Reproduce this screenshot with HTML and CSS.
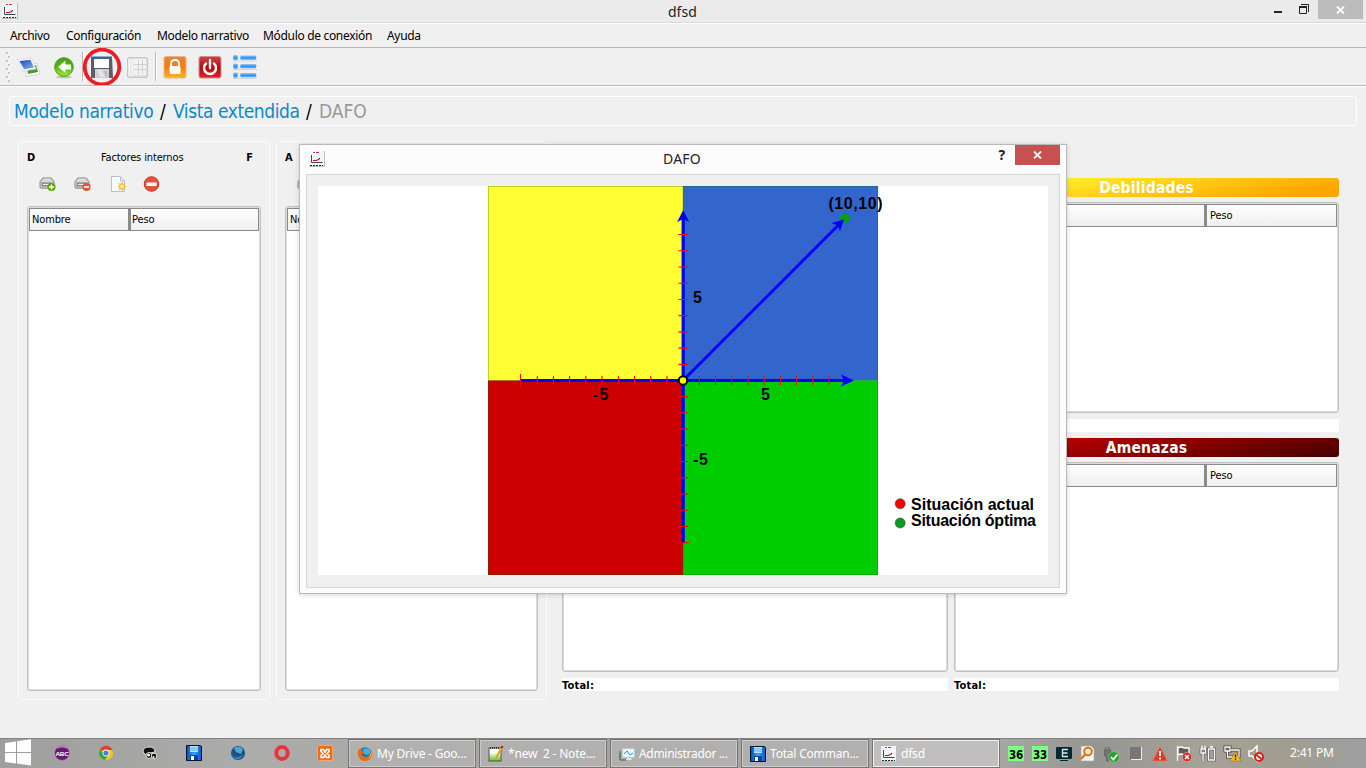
FILE: index.html
```html
<!DOCTYPE html>
<html lang="es">
<head>
<meta charset="utf-8">
<title>dfsd</title>
<link rel="stylesheet" href="styles.css">
</head>
<body>
<svg class="defs" width="0" height="0" aria-hidden="true">
  <defs>
    <linearGradient id="gBlue" x1="0" y1="0" x2="1" y2="1"><stop offset="0" stop-color="#1745ad"/><stop offset="1" stop-color="#8fb4ee"/></linearGradient>
    <linearGradient id="gGreen" x1="0" y1="0" x2="0" y2="1"><stop offset="0" stop-color="#3fa10e"/><stop offset=".5" stop-color="#5bb512"/><stop offset="1" stop-color="#a4e83a"/></linearGradient>
    <linearGradient id="gOrange" x1="0" y1="0" x2="0" y2="1"><stop offset="0" stop-color="#e8843a"/><stop offset=".5" stop-color="#fb7b04"/><stop offset="1" stop-color="#ffb52c"/></linearGradient>
    <linearGradient id="gRed" x1="0" y1="0" x2="0" y2="1"><stop offset="0" stop-color="#c9474a"/><stop offset=".5" stop-color="#b80a10"/><stop offset="1" stop-color="#e0212a"/></linearGradient>
    <linearGradient id="gBar" x1="0" y1="0" x2="0" y2="1"><stop offset="0" stop-color="#8cc4ff"/><stop offset=".5" stop-color="#2b8cf8"/><stop offset="1" stop-color="#55b2ff"/></linearGradient>
    <linearGradient id="gDisk" x1="0" y1="0" x2="1" y2="0"><stop offset="0" stop-color="#0a49b8"/><stop offset=".5" stop-color="#35a5ff"/><stop offset="1" stop-color="#0b55c8"/></linearGradient>
    <linearGradient id="gNote" x1="0" y1="0" x2="0" y2="1"><stop offset="0" stop-color="#ffffff"/><stop offset=".4" stop-color="#f4fbe8"/><stop offset="1" stop-color="#56c41c"/></linearGradient>
    <symbol id="app" viewBox="0 0 16 16">
      <rect width="16" height="16" fill="#b7c0c9"/><rect width="15" height="15" fill="#f4f7fa"/>
      <path d="M4 1.500h2M7 1.500h3" stroke="#c33"/><path d="M2.500 4v7.500h11" fill="none" stroke="#445"/>
      <path d="M4 9.500h3l2-.7 1.500-1" fill="none" stroke="#b11" stroke-width="1.100"/><path d="M10 7.500h1" stroke="#222"/>
      <path d="M1 14.500h13" stroke="#222" stroke-width="1" stroke-dasharray="2 1"/>
    </symbol>
    <symbol id="drive" viewBox="0 0 18 16">
      <path d="M4 2h9l3 4v6q0 1-1 1H2q-1 0-1-1V6z" fill="#c4c4c4" stroke="#8b8b8b"/>
      <path d="M4.500 3.500h8M3 5.500h11" stroke="#eee"/><rect x="3.500" y="7.500" width="10" height="3" fill="#aaa" stroke="#777"/><path d="M4 9h8" stroke="#f6f6f6"/>
    </symbol>
    <symbol id="disk" viewBox="0 0 16 16">
      <path d="M.5.5h14l1 1v14H.5z" fill="url(#gDisk)" stroke="#07112b"/><rect x="4" y="1" width="8" height="6" fill="#b9e2ff"/><path d="M4 3h8M4 5h8" stroke="#58aef6"/><rect x="4" y="10" width="8" height="5" fill="#0a4694"/><rect x="5" y="11" width="3" height="4" fill="#fff"/>
    </symbol>
    <symbol id="firefox" viewBox="0 0 16 16">
      <circle cx="8" cy="7.800" r="6.500" fill="#1b70b8"/><path d="M6 3q4-2 7 1 1 3-2 5l-4-1z" fill="#38b6e6"/>
      <path d="M1.500 3Q.5 5 1 9q1 5.500 7 6 6 0 7.500-7 0-3-2-5 1 4-1 6-2 3-5 1.500Q5 10 4.500 8q2 0 3-2L5 5 4 2Q2.500 3 2.500 5z" fill="#ec6815"/><path d="M14 4q2 6-3 9 3-3 3-9z" fill="#ffd532"/>
    </symbol>
  </defs>
</svg>

<div class="app">
  <header class="titlebar">
    <svg class="title-icon" width="16" height="16"><use href="#app"/></svg>
    <span class="title">dfsd</span>
    <div class="window-buttons">
      <svg width="25" height="19"><path d="M0 12h8" stroke="#222" stroke-width="2"/></svg>
      <svg width="12" height="19"><path d="M.5 6.500h7v7h-7zM2 4.500h7.500V12" fill="none" stroke="#222"/><path d="M0 7h8" stroke="#222" stroke-width="2"/></svg>
      <span class="close"><svg width="9" height="8"><path d="M1 .5l7 7M8 .5l-7 7" stroke="#fff" stroke-width="1.800"/></svg></span>
    </div>
  </header>

  <nav class="menubar">
    <span class="m1">Archivo</span><span class="m2">Configuración</span><span class="m3">Modelo narrativo</span><span class="m4">Módulo de conexión</span><span class="m5">Ayuda</span>
  </nav>

  <div class="toolbar">
    <svg width="1366" height="37" viewBox="0 48 1366 37">
      <g fill="#fff"><rect x="7" y="53" width="2" height="2"/><rect x="9" y="57" width="2" height="2"/><rect x="7" y="61" width="2" height="2"/><rect x="9" y="65" width="2" height="2"/><rect x="7" y="69" width="2" height="2"/><rect x="9" y="73" width="2" height="2"/><rect x="7" y="77" width="2" height="2"/></g>
      <g fill="#c6c6c6"><rect x="6" y="52" width="2" height="2"/><rect x="8" y="56" width="2" height="2"/><rect x="6" y="60" width="2" height="2"/><rect x="8" y="64" width="2" height="2"/><rect x="6" y="68" width="2" height="2"/><rect x="8" y="72" width="2" height="2"/><rect x="6" y="76" width="2" height="2"/><rect x="8" y="80" width="2" height="2"/></g>
      <path d="M26 65l11-2 3 11-14 2.500z" fill="#fff" stroke="#c2c8c2" stroke-width=".7"/><path d="M27 67l9-2 2 7-10 2z" fill="#49982c"/>
      <path d="M17.500 59.500l14-1.500 4.500 11-13 2z" fill="#fff" stroke="#ccd0d8" stroke-width=".7"/><path d="M19.500 61l11-1.300 3.500 8-10 1.500z" fill="url(#gBlue)"/>
      <ellipse cx="64" cy="77" rx="8" ry="1.500" fill="#b9c9ad"/>
      <circle cx="64" cy="67" r="9.300" fill="url(#gGreen)" stroke="#4c981c"/>
      <path d="M65.500 60.500L58 67l7.500 6v-3.500h5.500v-5h-5.500z" fill="#f8fff4"/>
      <path d="M82.500 52v29M155.500 52v29" stroke="#b9b9b9"/><path d="M83.500 52v29M156.500 52v29" stroke="#fff"/>
      <path d="M91 57h21l1 21H91z" fill="#5b5f65"/><rect x="94" y="59" width="15" height="9" fill="#fff"/><path d="M91 57.500h21" stroke="#2c6ba4" stroke-width="2"/><rect x="95" y="69" width="14" height="9" fill="#cfcfd3"/><path d="M97 70h5l3 7h-5z" fill="#e4e4e6"/><path d="M104 71h3v6h-1z" fill="#b9bcc1"/>
      <circle cx="102" cy="67" r="17.300" fill="none" stroke="#ed1c24" stroke-width="3.800"/>
      <rect x="127.500" y="57.500" width="20" height="20" rx="1.500" fill="#ddd" stroke="#c6c6c6"/><path d="M129.500 59v17M132.500 59v17" stroke="#f6f6f6" stroke-width="2"/><rect x="134" y="59" width="12" height="16" fill="#f3f3f3"/><path d="M138.500 60v14M142.500 60v14M134 64.500h12M134 69.500h12" stroke="#d0d0d0"/>
      <rect x="164" y="56.500" width="22" height="21.500" rx="2" fill="url(#gOrange)" stroke="#e5b48f"/><path d="M171 67v-3.500q0-3.500 4-3.500t4 3.500V67" fill="none" stroke="#fff" stroke-width="2"/><rect x="169.500" y="66" width="11" height="8" rx="1" fill="#fff"/>
      <rect x="199" y="56.500" width="22" height="21.500" rx="2" fill="url(#gRed)" stroke="#d09092"/><path d="M206 63.500a6 6 0 1 0 8 0M210 60v8" fill="none" stroke="#fff" stroke-width="2.400" stroke-linecap="round"/>
      <g stroke="#5ba4ea" stroke-width=".6" fill="url(#gBar)"><rect x="233.500" y="55.500" width="4" height="4.500" rx="1"/><rect x="240.500" y="56" width="15.500" height="3.500" rx="1"/><rect x="233.500" y="64" width="4" height="4.500" rx="1"/><rect x="240.500" y="64.500" width="15.500" height="3.500" rx="1"/><rect x="233.500" y="73" width="4" height="4.500" rx="1"/><rect x="240.500" y="73.500" width="15.500" height="3.500" rx="1"/></g>
      <path d="M233 61h24M233 69.500h24M233 78.500h24" stroke="#d2d6dc"/>
    </svg>
  </div>

  <div class="crumbs"><span class="c1">Modelo narrativo</span><span class="c2">/</span><span class="c3">Vista extendida</span><span class="c4">/</span><span class="c5">DAFO</span></div>

  <main class="workspace">
    <section class="panel panel-a">
      <div class="panel-head"><b>D</b><span class="factors">Factores internos</span><b>F</b></div>
      <svg class="panel-tools" width="140" height="22">
        <use href="#drive" x="10" y="3" width="17" height="15"/><circle cx="22.500" cy="14" r="4" fill="#58a80c"/><path d="M20 14h5M22.500 11.500v5" stroke="#fff" stroke-width="1.500"/>
        <use href="#drive" x="45" y="3" width="17" height="15"/><circle cx="57.500" cy="14" r="4" fill="#e25238"/><path d="M55 14h5" stroke="#fff" stroke-width="1.500"/>
        <path d="M82.500 3.500h9l4 4v11h-13z" fill="#fafbfe" stroke="#b9bed2"/><path d="M91.500 4v4h4" fill="#e6e9f3" stroke="#b9bed2"/><path d="M93 8.500l1 2.300 2.500-.8-1 2.500 2.300 1-2.300 1 1 2.500-2.500-.8-1 2.300-1-2.300-2.500.8 1-2.500-2.300-1 2.300-1-1-2.500 2.500.8z" fill="#f1b849"/><circle cx="93" cy="13.500" r="2" fill="#fce69b"/>
        <circle cx="122.500" cy="11" r="7.300" fill="#e4513d" stroke="#c43c2d"/><rect x="117.500" y="9.500" width="10" height="3.500" rx=".5" fill="#fff"/>
      </svg>
      <div class="table"><div class="thead"><span class="th name">Nombre</span><span class="th">Peso</span></div></div>
    </section>
    <section class="panel panel-b">
      <div class="panel-head"><b>A</b></div>
      <svg class="panel-tools" width="140" height="22"><use href="#drive" x="10" y="3" width="17" height="15"/></svg>
      <div class="table"><div class="thead"><span class="th name">Nombre</span><span class="th">Peso</span></div></div>
    </section>
    <section class="matrix">
      <div class="quad"><div class="band"></div><div class="table"></div><div class="total"></div></div>
      <div class="quad"><div class="band yellow">Debilidades</div><div class="table"><div class="thead"><span class="th"></span><span class="th weight">Peso</span></div></div><div class="total"></div></div>
      <div class="quad low"><div class="band"></div><div class="table"></div><div class="total">Total:</div></div>
      <div class="quad low"><div class="band red">Amenazas</div><div class="table"><div class="thead"><span class="th"></span><span class="th weight">Peso</span></div></div><div class="total">Total:</div></div>
    </section>
  </main>

  <footer class="taskbar">
    <svg class="launchers" width="348" height="29" viewBox="0 739 348 29">
      <path d="M5 743l11-1.500v10.500H5zM17 741.300l14-2v12.700H17zM5 753h11v10.500L5 762zM17 753h14v12.500l-14-2z" fill="#fff"/>
      <circle cx="62" cy="753" r="7.500" fill="#651b68" stroke="#b889ba" stroke-width=".8"/><path d="M57 748q5-3 10 0" stroke="#b67bb9" stroke-width="2" fill="none"/><text x="62" y="755.500" text-anchor="middle" class="abc" textLength="13" lengthAdjust="spacingAndGlyphs">ABC</text>
      <circle cx="106" cy="753" r="7" fill="#f5c51c"/><path d="M106 753L99.900 749.500A7 7 0 0 1 112.500 750H106z" fill="#dd4231"/><path d="M99.900 749.500A7 7 0 0 0 105 759.900l3.500-5.500-5-1z" fill="#3ba14b"/><circle cx="106" cy="753" r="3.400" fill="#fff"/><circle cx="106" cy="753" r="2.600" fill="#3e7fdc"/>
      <g fill="#111" stroke="#ddd" stroke-width="1"><path d="M143 752q0-5 6-5 6 0 6 5l-5 1-4 2z"/><circle cx="149" cy="755.500" r="3"/><circle cx="154" cy="756" r="2.800"/></g><circle cx="148.500" cy="755" r="1.500" fill="#fff"/><circle cx="153.500" cy="757" r="1" fill="#fff"/>
      <use href="#disk" x="186" y="745" width="16" height="16"/>
      <circle cx="238" cy="753" r="7" fill="#1c5385"/><path d="M234 748q5-3 9 1l-2 5-5-2z" fill="#4ba6d8"/><path d="M231 750q0 8 7 7l5-2q-2 5-7 4-5-2-5-9z" fill="#2d83bd"/>
      <ellipse cx="282" cy="753" rx="5.700" ry="6" fill="none" stroke="#e8353c" stroke-width="4"/>
      <rect x="317.500" y="745.500" width="15" height="15" rx="1.500" fill="#ed6d17" stroke="#f5a66b"/><path d="M321 749.500h2.500l1.500 2.500 1.500-2.500h2.500v2l-2 2 2 2v2h-2.500L325 755l-1.500 2.500H321v-2l2-2-2-2z" fill="none" stroke="#fff" stroke-width="1.600"/>
    </svg>
    <div class="tasks">
      <div class="task"><svg width="16" height="16"><use href="#firefox"/></svg><span class="t1">My Drive - Goo...</span></div>
      <div class="task"><svg width="16" height="16"><rect x="1" y="2" width="12" height="13" fill="url(#gNote)" stroke="#555"/><path d="M2 2h10" stroke="#333" stroke-width="2" stroke-dasharray="1 1"/><path d="M8 12l6-11" stroke="#e1a117" stroke-width="2"/><path d="M13.500 2l1-2" stroke="#a11" stroke-width="2"/></svg><span class="t2">*new&nbsp; 2 - Note...</span></div>
      <div class="task"><svg width="16" height="16"><path d="M1 5v9h6" stroke="#555" fill="none"/><rect x="3.500" y="2.500" width="12" height="9" fill="#e8f7ff" stroke="#b8c4ca"/><path d="M5 8l3-3 3 4 3-2" fill="none" stroke="#2f91c9"/><path d="M7 14h6l-1-2H8z" fill="#e5e5e5"/><rect y="8" width="2" height="4" fill="#499042"/></svg><span class="t3">Administrador ...</span></div>
      <div class="task"><svg width="16" height="16"><use href="#disk"/></svg><span class="t4">Total Comman...</span></div>
      <div class="task active"><svg width="16" height="16"><use href="#app"/></svg><span class="t5">dfsd</span></div>
    </div>
    <svg class="tray" width="270" height="29" viewBox="1000 739 270 29">
      <rect x="1008" y="746" width="16" height="15" fill="#7eff7e"/><rect x="1032" y="746" width="16" height="15" fill="#7eff7e"/>
      <text x="1016" y="759" text-anchor="middle" class="num" textLength="14" lengthAdjust="spacingAndGlyphs">36</text><text x="1040" y="759" text-anchor="middle" class="num" textLength="14" lengthAdjust="spacingAndGlyphs">33</text>
      <rect x="1056" y="747" width="16" height="12" rx="1" fill="#062931"/><path d="M1068 749.500h-5.500v7h5.500M1063 753h4.500" fill="none" stroke="#dce8e8" stroke-width="1.300"/><path d="M1060 760.500h8" stroke="#062931"/>
      <path d="M1081 746h10l3 3v12h-13z" fill="#f7f7f7" stroke="#aaa" stroke-width=".7"/><circle cx="1088" cy="751.500" r="3.800" fill="#fff3df" stroke="#df7418" stroke-width="2"/><path d="M1085 754.500l-4 4.500" stroke="#df7418" stroke-width="2.500"/>
      <path d="M1104.500 750h6v5l-2 2v4h-2v-4l-2-2zM1106 747v3M1109 747v3" fill="#777" stroke="#686868" stroke-width="1.200"/><circle cx="1114" cy="757" r="5.300" fill="#20a02a" stroke="#87d58b" stroke-width=".6"/><path d="M1111 757l2.300 2.500 4-5" fill="none" stroke="#fff" stroke-width="1.800"/>
      <rect x="1130" y="747" width="11" height="13" fill="#777"/><path d="M1131 759.500h11M1141.500 747v13" stroke="#eee"/>
      <path d="M1160 746.500l7.500 14.500h-15z" fill="#e13927" stroke="#f07b68" stroke-width=".7"/><path d="M1160 751v5M1160 757.500v2" stroke="#fff" stroke-width="1.800"/>
      <path d="M1177.500 746v15M1178 748q3-2 6 0h5v7h-5q-3-2-6 0z" fill="#5d5d5d" stroke="#fff" stroke-width="1.300"/><circle cx="1187" cy="757" r="4.600" fill="#dc2721" stroke="#f5aaa6" stroke-width=".6"/><path d="M1185 755l4 4M1189 755l-4 4" stroke="#fff" stroke-width="1.500"/>
      <g fill="none" stroke="#444" stroke-width="2.500"><path d="M1208.500 749h6v11h-6zM1203 753v8M1201 749h4.500v4h-4.500z"/></g><g fill="none" stroke="#fff" stroke-width="1.400"><path d="M1208.500 749h6v11h-6zM1210 747h3M1203 753v8M1201 749h4.500v4h-4.500zM1202 746v3M1205 746v3"/></g>
      <path d="M1225 747h5v4h-5zM1227.500 751v6h5M1231 750h8v7h-8" fill="none" stroke="#444" stroke-width="3"/><path d="M1225 747h5v4h-5zM1227.500 751v6h5M1231 750h8v7h-8" fill="none" stroke="#fff" stroke-width="1.300"/><path d="M1235.500 751.500l5.500 9.500h-11z" fill="#f7bd1c" stroke="#8d6c12" stroke-width=".5"/><path d="M1235.500 754.500v3M1235.500 758.500v1.500" stroke="#222" stroke-width="1.300"/>
      <path d="M1249 751h3l5-5v15l-5-5h-3z" fill="none" stroke="#fff" stroke-width="1.500"/><circle cx="1259" cy="757" r="4" fill="#fff" stroke="#d8201c" stroke-width="2"/><path d="M1256 754.500l6 5" stroke="#d8201c" stroke-width="2"/>
    </svg>
    <span class="clock">2:41 PM</span>
  </footer>
</div>

<div class="dialog">
  <div class="dialog-head">
    <svg class="dialog-icon" width="16" height="16"><use href="#app"/></svg><span class="dialog-title">DAFO</span><span class="help">?</span>
    <span class="dialog-close"><svg width="9" height="8"><path d="M1 .5l7 7M8 .5l-7 7" stroke="#fff" stroke-width="1.800"/></svg></span>
  </div>
  <div class="dialog-body">
    <svg class="chart" width="730" height="389" viewBox="318 186 730 389">
      <rect x="488" y="186" width="195" height="194.500" fill="#ff3"/><rect x="683" y="186" width="195" height="194.500" fill="#36c"/><rect x="488" y="380.500" width="195" height="194.500" fill="#c00"/><rect x="683" y="380.500" width="195" height="194.500" fill="#00cd00"/>
      <path d="M488.500 575V186.500h389V575M488 574.500h390M488 380.500h390M683 186v389" fill="none" stroke="#060" stroke-opacity=".28"/>
      <path d="M520.500 380.500h326M683.200 543V216" stroke="#00f" stroke-width="3.200"/>
      <path d="M854 380.500l-13 6 3-6-3-6zM683.200 210l6 12-6-3-6 3z" fill="#00f"/>
      <circle cx="845" cy="218.300" r="5" fill="#0e9a20" stroke="#085" stroke-width=".8"/>
      <path d="M683 380.500L839 224.500" stroke="#00f" stroke-width="3"/><path d="M844 219.500l-4 12-2-6-6.500-2.500z" fill="#00f"/>
      <g stroke="#f00" stroke-width="1.100">
        <path d="M520.500 374v13M537.300 376v9M553.500 376v9M569.600 376v9M585.800 376v9M602 376v9M618.300 376v9M634.500 376v9M650.700 376v9M667 376v9"/>
        <path d="M699.300 376v9M715.500 376v9M731.700 376v9M748 376v9M764.200 376v9M780.500 376v9M796.600 376v9M812.800 376v9M829 376v9" stroke-opacity=".9"/>
        <path d="M678.500 234.500h9.500M678.500 250.700h9.500M678.500 267h9.500M678.500 283.200h9.500M678.500 299.500h9.500M678.500 315.600h9.500M678.500 331.900h9.500M678.500 348.100h9.500M678.500 364.400h9.500M678.500 396.600h9.500M678.500 412.800h9.500M678.500 429h9.500M678.500 445.300h9.500M678.500 461.500h9.500M678.500 477.700h9.500M678.500 494h9.500M678.500 510.200h9.500M678.500 526.400h9.500M678 542.800h11"/>
      </g>
      <circle cx="683" cy="380.500" r="4.200" fill="#ff0" stroke="#000" stroke-width="2"/>
      <g class="chart-text"><text x="828.500" y="209" textLength="54">(10,10)</text><text x="693" y="303">5</text><text x="761" y="400">5</text><text x="592.500" y="400" textLength="16">-5</text><text x="693" y="465" textLength="15">-5</text><text x="911" y="510" textLength="123">Situación actual</text><text x="911" y="526" textLength="125">Situación óptima</text></g>
      <circle cx="900.200" cy="503.800" r="5" fill="#f00" stroke="#444" stroke-width=".6"/><circle cx="900.200" cy="523" r="5" fill="#0e9a20" stroke="#444" stroke-width=".6"/>
    </svg>
  </div>
</div>
</body>
</html>
```
FILE: styles.css
```css
* { box-sizing: border-box; }
body { margin: 0; width: 1366px; height: 768px; overflow: hidden; background: #f0f0f0; color: #000; font: 11px/14px "DejaVu Sans Condensed", "DejaVu Sans", sans-serif; font-stretch: condensed; letter-spacing: -.13px; }
svg { display: block; flex: none; }
.defs { position: absolute; }
.app { height: 768px; display: flex; flex-direction: column; }
.titlebar { height: 23px; flex: none; background: #ebebeb; border-bottom: 1px solid #d9d9d9; display: flex; align-items: flex-start; }
.title-icon { margin: 3px 0 0 2px; }
.title { width: 1347px; margin: 2px -1105px 0 0; padding-left: 650px; font: 14px/20px "Noto Sans", sans-serif; letter-spacing: 0; color: #222; flex: none; }
.window-buttons { display: flex; margin-left: auto; flex: none; margin-right: 3px; }
.close { width: 45px; height: 19px; background: #bcbcbc; display: flex; align-items: center; justify-content: center; margin-left: 7px; }
.menubar { height: 25px; flex: none; border-top: 1px solid #fff; border-bottom: 1px solid #b9b9b9; display: flex; padding: 4px 0 0 10px; font: 12px/16px "Noto Sans", sans-serif; letter-spacing: -.32px; white-space: nowrap; }
.menubar span { flex: none; }
.m1 { width: 56px; }
.m2 { width: 91px; }
.m3 { width: 106px; }
.m4 { width: 124px; }
.toolbar { height: 38px; flex: none; border-bottom: 1px solid #b9b9b9; box-shadow: 0 1px #fff; }
.crumbs { height: 30px; flex: none; margin: 10px 9px 0; border: 1px solid #fff; border-radius: 3px; display: flex; padding-left: 4px; font-size: 19px; line-height: 28px; letter-spacing: -.33px; white-space: nowrap; color: #0a89cd; }
.crumbs span { flex: none; }
.c1 { width: 146px; }
.c2 { width: 13px; color: #000; }
.c3 { width: 133px; letter-spacing: -.42px; }
.c4 { width: 13px; color: #000; }
.c5 { color: #999; letter-spacing: 0; }
.workspace { flex: 1; min-height: 0; display: flex; align-items: flex-start; padding: 15px 27px 0 18px; }
.panel { height: 559px; border: 1px solid #fcfcfc; border-radius: 5px; padding: 9px 8px 8px; display: flex; flex-direction: column; flex: none; }
.panel-a { width: 252px; }
.panel-b { width: 271px; margin-left: 6px; }
.panel-head { display: flex; justify-content: space-between; height: 16px; padding: 0 8px 0 0; }
.factors { padding-left: 3px; }
.panel-tools { margin: 6px 0 11px 2px; }
.panel-a .table { width: 234px; }
.table { flex: 1; min-height: 0; background: #fff; border: 1px solid #c0c0c0; border-radius: 3px; box-shadow: inset 0 0 0 1px #ddd; padding: 1px; }
.thead { display: flex; height: 23px; }
.th { flex: 1; border: 1px solid #8b8b8b; background: linear-gradient(#fff, #efefef); padding: 4px 0 0 2px; }
.th + .th { border-left-width: 2px; padding-left: 1px; }
.th.name { flex: none; width: 100px; }
.th + .th.weight { flex: none; width: 132px; padding-left: 3px; }
.matrix { display: grid; grid-template-columns: 386px 385px; column-gap: 6px; row-gap: 6px; padding: 37px 0 0 15px; }
.quad { height: 254px; display: flex; flex-direction: column; }
.quad .table { margin: 5px 0 6px; }
.quad.low { height: 253px; }
.band { height: 19px; flex: none; border-radius: 3px; color: #fff; text-align: center; font: bold 15.5px/20px "DejaVu Sans Condensed", "DejaVu Sans", sans-serif; letter-spacing: .2px; }
.yellow { background: linear-gradient(170deg, #fff12b 20%, #ffa500 88%); }
.red { background: linear-gradient(170deg, #ca0000 12%, #450000); }
.total { height: 13px; flex: none; background: #fff; font-weight: bold; line-height: 15px; letter-spacing: .2px; }
.taskbar { height: 30px; flex: none; border-top: 1px solid #828282; background: linear-gradient(90deg, #9e9e9d, #acacaa 18%, #a5a4a2 45%, #aaa9a7 72%, #969590 80%, #a5a298 88%, #a19d90 94%, #9f9fa0); display: flex; color: #fff; font: 12px/28px "Noto Sans", sans-serif; letter-spacing: -.2px; }
.tasks { display: flex; gap: 3px; flex: none; }
.task { width: 128px; height: 29px; border: 1px solid #747474; box-shadow: inset 0 0 0 1px #cbcbcb; background: #b1b0af; display: flex; align-items: center; padding-left: 8px; gap: 4px; white-space: nowrap; }
.t3 { letter-spacing: -.3px; }
.active { box-shadow: inset 0 0 0 1px #f3f3f3; background: #c0bfbe; }
.clock { margin-left: 20px; }
.abc { font: bold 6px "Liberation Sans", sans-serif; fill: #fff; }
.num { font: bold 13px "DejaVu Sans Condensed", sans-serif; fill: #000; }
.dialog { position: absolute; left: 299px; top: 144px; width: 768px; height: 450px; background: #fcfcfc; border: 1px solid #b9b9b9; box-shadow: 0 1px 5px rgba(0, 0, 0, .16); padding: 0 6px; }
.dialog-head { height: 29px; display: flex; align-items: flex-start; }
.dialog-icon { margin: 6px 0 0 3px; }
.dialog-title { width: 60px; margin: 4px 0 0 338px; font: 14px/20px "Noto Sans", sans-serif; letter-spacing: .2px; color: #222; }
.help { margin-left: auto; margin-right: 10px; font: bold 14px/20px "Noto Sans", sans-serif; color: #222; }
.dialog-close { width: 45px; height: 20px; background: #c75050; display: flex; align-items: center; justify-content: center; }
.dialog-body { height: 414px; background: #f0f0f0; border: 1px solid #d5d5d5; padding: 11px; }
.chart { background: #fff; letter-spacing: 0; }
.chart-text { font: bold 16px "Liberation Sans", Arial, sans-serif; fill: #000; }
```
